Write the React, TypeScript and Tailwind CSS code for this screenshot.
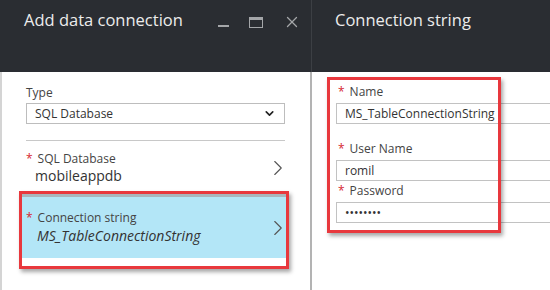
import { ChevronDown, ChevronRight, X } from "lucide-react";

const Star = () => <span className="mr-[5px] text-[#d6262f]">*</span>;

const Field = ({ label, value }: { label: string; value: string }) => (
  <div>
    <div className="pl-[2px] text-[12px] leading-[16px] text-[#444]">
      <Star />
      {label}
    </div>
    <div className="mt-[3px] flex h-[21px] w-[260px] items-center border border-[#c2c2c2] pl-[8px] text-[12px] text-[#333]">
      {value}
    </div>
  </div>
);

export default function App() {
  return (
    <div className="flex h-[290px] w-[550px] overflow-hidden bg-white font-['Open_Sans',sans-serif]">
      <div className="flex w-[312px] shrink-0 flex-col">
        <div className="flex h-[72px] shrink-0 items-start justify-between border-r border-[#3c3f44] bg-[#2a2d32] pl-[24px] pt-[7px]">
          <h1 className="text-[16.5px] leading-[26px] text-[#ececec]">Add data connection</h1>
          <div className="flex items-center gap-[20px] pt-[6px] pr-[10px] text-[#a4a6a9]">
            <span className="mt-[8px] block h-[2px] w-[11px] bg-[#a4a6a9]" />
            <span className="block h-[11px] w-[14px] border-[1.5px] border-t-[3px] border-[#a4a6a9]" />
            <X size={18} strokeWidth={1.7} />
          </div>
        </div>
        <div className="flex-1 border-l-2 border-r-2 border-l-[#d4d4d4] border-r-[#b3b3b3] pr-[25px] pl-[24px] pt-[13px]">
          <div className="text-[12px] leading-[16px] text-[#444]">Type</div>
          <div className="mt-[2px] flex h-[21px] items-center justify-between border border-[#bdbdbd] pl-[8px] pr-[8px] text-[12px] text-[#333]">
            <span>SQL Database</span>
            <ChevronDown size={13} strokeWidth={3} className="text-[#222]" />
          </div>
          <div className="mt-[16px] h-px bg-[#c8c8c8]" />
          <div className="mt-[10px] flex items-center justify-between">
            <div>
              <div className="text-[12px] leading-[16px] text-[#444]">
                <Star />
                SQL Database
              </div>
              <div className="pl-[9px] text-[14px] leading-[18px] text-[#333]">mobileappdb</div>
            </div>
            <ChevronRight size={26} strokeWidth={1} className="-mr-[6px] text-[#555]" />
          </div>
          <div className="mt-[6px] -ml-[7px] -mr-[4px] border-[3px] border-[#e8383d] shadow-[2px_3px_4px_rgba(0,0,0,0.35)]">
            <div className="h-[3px] bg-[#a9b6bc]" />
            <div className="flex h-[61px] items-center justify-between bg-[#b3e6f7] pl-[4px]">
              <div>
                <div className="text-[12px] leading-[16px] text-[#444]">
                  <Star />
                  Connection string
                </div>
                <div className="pl-[11px] text-[14px] italic leading-[20px] text-[#333]">
                  MS_TableConnectionString
                </div>
              </div>
              <ChevronRight size={26} strokeWidth={1} className="-mr-[5px] text-[#555]" />
            </div>
            <div className="h-[8px] bg-white" />
          </div>
        </div>
      </div>
      <div className="flex flex-1 flex-col">
        <div className="h-[72px] shrink-0 bg-[#2a2d32] pl-[23px] pt-[7px]">
          <h1 className="text-[16.5px] leading-[26px] text-[#ececec]">Connection string</h1>
        </div>
        <div className="relative flex-1 pl-[24px] pt-[12px]">
          <Field label="Name" value="MS_TableConnectionString" />
          <div className="mt-[17px]">
            <Field label="User Name" value="romil" />
          </div>
          <div className="mt-[2px]">
            <Field label="Password" value="••••••••" />
          </div>
          <div className="pointer-events-none absolute left-[15px] top-[5px] h-[156px] w-[174px] border-[3px] border-[#e8383d] shadow-[2px_3px_4px_rgba(0,0,0,0.35)]" />
        </div>
      </div>
    </div>
  );
}
